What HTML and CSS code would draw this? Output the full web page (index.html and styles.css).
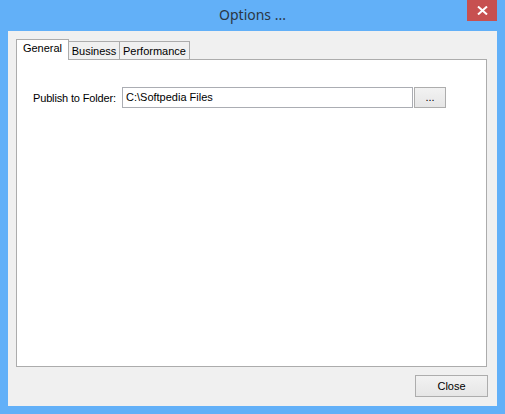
FILE: index.html
```html
<!DOCTYPE html>
<html>
<head>
<meta charset="utf-8">
<link rel="stylesheet" href="styles.css">
</head>
<body>
<div class="window">
  <div class="titlebar">
    <div class="title">Options ...</div>
    <div class="close-x">
      <svg width="11" height="9" viewBox="0 0 11 9"><path d="M1 0.5 L10 8.5 M10 0.5 L1 8.5" stroke="#fff" stroke-width="2"/></svg>
    </div>
  </div>
  <div class="client">
    <div class="tabs">
      <div class="tab active">General</div>
      <div class="tab">Business</div>
      <div class="tab">Performance</div>
    </div>
    <div class="panel">
      <div class="row">
        <span class="label">Publish to Folder:</span>
        <div class="field">C:\Softpedia Files</div>
        <div class="btn dots">...</div>
      </div>
    </div>
    <div class="footer">
      <div class="btn close">Close</div>
    </div>
  </div>
</div>
</body>
</html>
```
FILE: styles.css
```css
html, body {
  margin: 0;
  padding: 0;
}
body {
  font-family: "Liberation Sans", Arial, sans-serif;
  font-size: 11px;
  color: #000;
}
.window {
  width: 505px;
  height: 414px;
  background: #62b0f8;
  display: flex;
  flex-direction: column;
  box-sizing: border-box;
}
.titlebar {
  height: 31px;
  position: relative;
  display: flex;
  justify-content: center;
  align-items: flex-start;
}
.title {
  font-family: "Noto Sans", sans-serif;
  font-size: 14px;
  color: #2b3644;
  padding-top: 5px;
  line-height: 20px;
}
.close-x {
  position: absolute;
  right: 8px;
  top: 0;
  width: 30px;
  height: 21px;
  background: #c75050;
  display: flex;
  align-items: center;
  justify-content: center;
}
.client {
  flex: 1;
  margin: 0 8px 8px 8px;
  background: #f0f0f0;
  padding: 8px 10px 9px 8px;
  display: flex;
  flex-direction: column;
}
.tabs {
  display: flex;
  align-items: flex-end;
  height: 20px;
  position: relative;
  z-index: 1;
}
.tab {
  box-sizing: border-box;
  height: 18px;
  border: 1px solid #acacac;
  border-bottom: none;
  background: #f0f0f0;
  line-height: 18px;
  text-align: center;
  margin-left: -1px;
  white-space: nowrap;
}
.tab.active {
  height: 21px;
  margin-bottom: -1px;
  background: #fff;
  margin-left: 0;
  line-height: 17px;
  width: 53px;
}
.tab:nth-child(2) { width: 52px; }
.tab:nth-child(3) { width: 71px; }
.panel {
  height: 308px;
  box-sizing: border-box;
  border: 1px solid #acacac;
  background: #fff;
  padding: 27px 20px 0 16px;
}
.row {
  display: flex;
  align-items: center;
}
.label {
  flex-shrink: 0;
  width: 89px;
  white-space: nowrap;
  padding-top: 1px;
  letter-spacing: -0.15px;
}
.field {
  flex-shrink: 0;
  box-sizing: border-box;
  width: 291px;
  height: 21px;
  border: 1px solid #abadb3;
  background: #fff;
  padding: 0 3px;
  line-height: 19px;
  white-space: nowrap;
}
.btn {
  box-sizing: border-box;
  border: 1px solid #adadad;
  background: linear-gradient(#f2f2f2, #e6e6e6);
  display: flex;
  align-items: center;
  justify-content: center;
}
.dots {
  flex-shrink: 0;
  width: 32px;
  height: 21px;
  margin-left: 1px;
  padding-bottom: 2px;
}
.footer {
  flex: 1;
  display: flex;
  justify-content: flex-end;
  align-items: flex-end;
}
.close {
  width: 73px;
  height: 22px;
  margin-right: -1px;
}
```
